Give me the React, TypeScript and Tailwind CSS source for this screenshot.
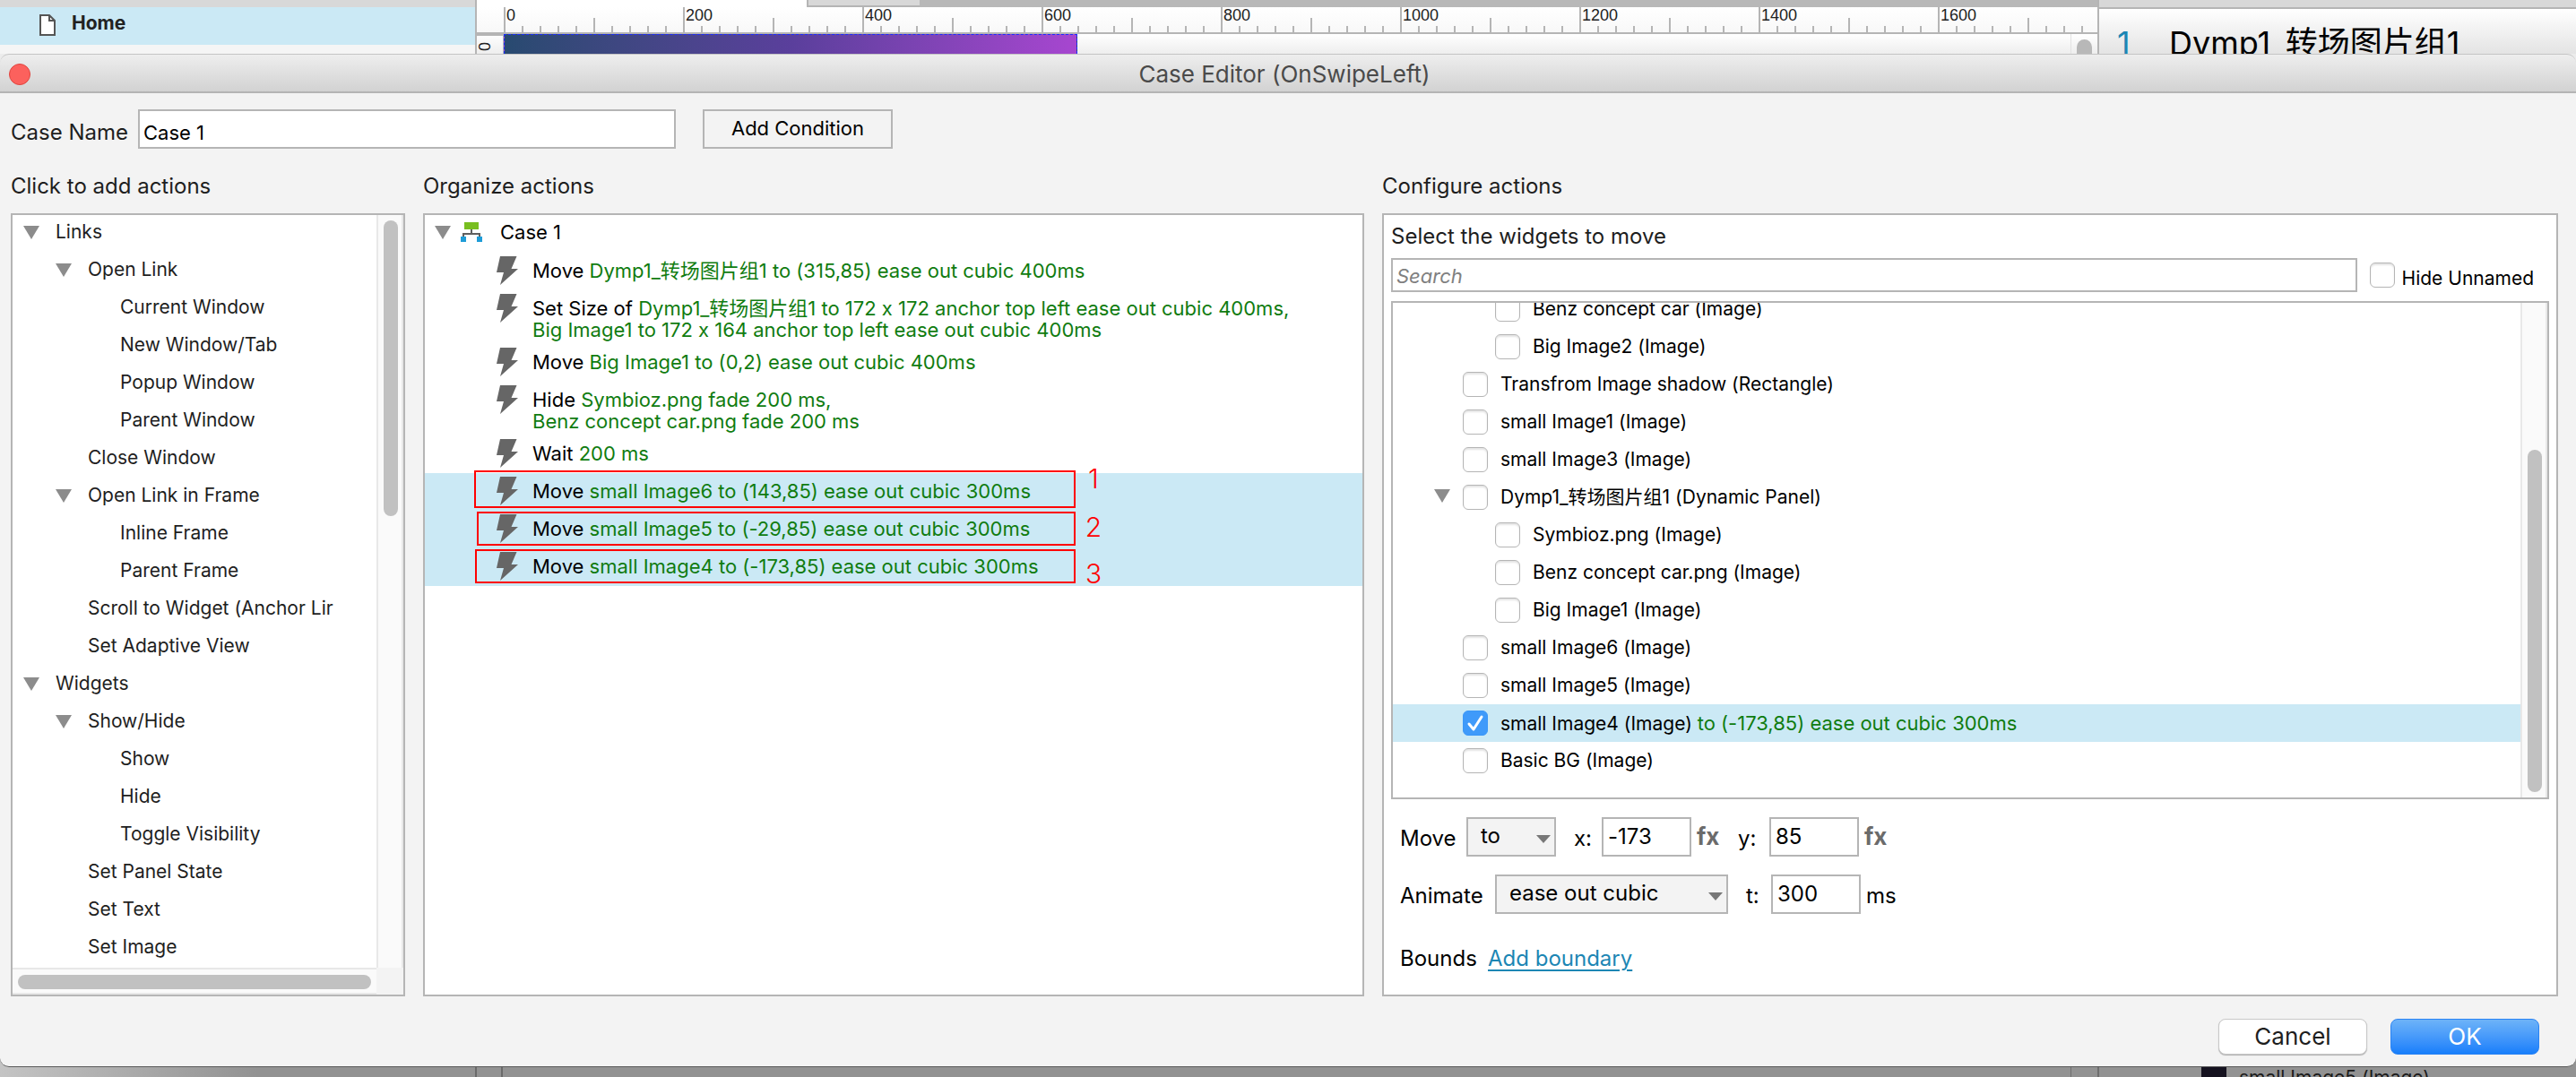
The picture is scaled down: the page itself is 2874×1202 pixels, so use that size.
import React from "react";

const GREEN = "text-[#107c10]";

type ActionNode = { label: string; level: 0 | 1 | 2; open?: boolean };

const actionNodes: ActionNode[] = [
  { label: "Links", level: 0, open: true },
  { label: "Open Link", level: 1, open: true },
  { label: "Current Window", level: 2 },
  { label: "New Window/Tab", level: 2 },
  { label: "Popup Window", level: 2 },
  { label: "Parent Window", level: 2 },
  { label: "Close Window", level: 1 },
  { label: "Open Link in Frame", level: 1, open: true },
  { label: "Inline Frame", level: 2 },
  { label: "Parent Frame", level: 2 },
  { label: "Scroll to Widget (Anchor Lir", level: 1 },
  { label: "Set Adaptive View", level: 1 },
  { label: "Widgets", level: 0, open: true },
  { label: "Show/Hide", level: 1, open: true },
  { label: "Show", level: 2 },
  { label: "Hide", level: 2 },
  { label: "Toggle Visibility", level: 2 },
  { label: "Set Panel State", level: 1 },
  { label: "Set Text", level: 1 },
  { label: "Set Image", level: 1 },
];

const levelPad = { 0: "pl-3", 1: "pl-12", 2: "pl-[84px]" };

type Step = { verb: string; lines: string[]; selected?: boolean };

const steps: Step[] = [
  { verb: "Move", lines: ["Dymp1_转场图片组1 to (315,85) ease out cubic 400ms"] },
  {
    verb: "Set Size of",
    lines: [
      "Dymp1_转场图片组1 to 172 x 172 anchor top left ease out cubic 400ms,",
      "Big Image1 to 172 x 164 anchor top left ease out cubic 400ms",
    ],
  },
  { verb: "Move", lines: ["Big Image1 to (0,2) ease out cubic 400ms"] },
  { verb: "Hide", lines: ["Symbioz.png fade 200 ms,", "Benz concept car.png fade 200 ms"] },
  { verb: "Wait", lines: ["200 ms"] },
  { verb: "Move", lines: ["small Image6 to (143,85) ease out cubic 300ms"], selected: true },
  { verb: "Move", lines: ["small Image5 to (-29,85) ease out cubic 300ms"], selected: true },
  { verb: "Move", lines: ["small Image4 to (-173,85) ease out cubic 300ms"], selected: true },
];

type Widget = { label: string; nested?: boolean; open?: boolean; detail?: string };

const widgets: Widget[] = [
  { label: "Benz concept car (Image)", nested: true },
  { label: "Big Image2 (Image)", nested: true },
  { label: "Transfrom Image shadow (Rectangle)" },
  { label: "small Image1 (Image)" },
  { label: "small Image3 (Image)" },
  { label: "Dymp1_转场图片组1 (Dynamic Panel)", open: true },
  { label: "Symbioz.png (Image)", nested: true },
  { label: "Benz concept car.png (Image)", nested: true },
  { label: "Big Image1 (Image)", nested: true },
  { label: "small Image6 (Image)" },
  { label: "small Image5 (Image)" },
  { label: "small Image4 (Image)", detail: "to (-173,85) ease out cubic 300ms" },
  { label: "Basic BG (Image)" },
];

const annotations = [
  { n: "1", box: "left-[55px] right-[320px] top-[285px] h-[42px]", tag: "top-[276px]" },
  { n: "2", box: "left-[58px] right-[320px] top-[331px] h-[38px]", tag: "top-[330px]" },
  { n: "3", box: "left-[56px] right-[320px] top-[373px] h-[38px]", tag: "top-[382px]" },
];

function Triangle() {
  return (
    <svg width="18" height="16" viewBox="0 0 18 16" className="shrink-0" aria-hidden="true">
      <path d="M0 1h18L9 16z" fill="#8c8c8c" />
    </svg>
  );
}

function Bolt() {
  return (
    <svg width="24" height="32" viewBox="0 0 24 32" className="mt-1 shrink-0" aria-hidden="true">
      <path d="M4 0h18.500l-6 14H24L4 32l4-14H0z" fill="#666" />
    </svg>
  );
}

function CaseIcon() {
  return (
    <svg width="24" height="22" viewBox="0 0 24 22" className="shrink-0" aria-hidden="true">
      <path d="M12 8v5M3 17v-4h18v4" fill="none" stroke="#5f5f5f" strokeWidth="2" />
      <path d="M4 0h16v8H4z" fill="#78be20" />
      <path d="M0 16h6v6H0zM18 16h6v6h-6z" fill="#1e9cd7" />
    </svg>
  );
}

function Check({ id, checked }: { id: string; checked?: boolean }) {
  return (
    <span className="relative flex size-7 shrink-0">
      <input
        id={id}
        type="checkbox"
        defaultChecked={checked}
        className="peer size-7 appearance-none rounded-md border border-[#b5b5b5] bg-white shadow-[inset_0_2px_2px_#e4e4e4] checked:border-[#3b97f8] checked:bg-[#3f9afa] checked:shadow-none"
      />
      <svg viewBox="0 0 28 28" className="pointer-events-none absolute inset-0 hidden peer-checked:block" aria-hidden="true">
        <path d="M7 15l5 6 9-14" fill="none" stroke="#fff" strokeWidth="3" strokeLinecap="round" strokeLinejoin="round" />
      </svg>
    </span>
  );
}

function Combo({ label, value, width }: { label: string; value: string; width: string }) {
  return (
    <span className={`relative flex h-11 ${width}`}>
      <select
        aria-label={label}
        className="h-full w-full appearance-none border-2 border-[#b5b5b5] bg-[#f3f3f3] pb-[2px] pl-[14px] text-black outline-none"
      >
        <option>{value}</option>
      </select>
      <svg width="16" height="9" viewBox="0 0 16 9" className="pointer-events-none absolute top-5 right-[6px]" aria-hidden="true">
        <path d="M0 0h16L8 9z" fill="#777" />
      </svg>
    </span>
  );
}

function NumberBox({ id, value }: { id: string; value: string }) {
  return (
    <input
      id={id}
      type="text"
      defaultValue={value}
      className="h-11 w-[100px] border-2 border-[#b5b5b5] bg-white pb-[2px] pl-[5px] text-black outline-none"
    />
  );
}

function FxButton() {
  return (
    <button type="button" className="ml-[6px] w-[28px] text-left text-[26px] leading-8 font-bold text-[#6b6b6b]">
      fx
    </button>
  );
}

function Ruler() {
  return (
    <div className="flex h-[30px] shrink-0 items-stretch overflow-hidden border-b-2 border-[#b5b5b5] bg-gradient-to-b from-white to-[#f8f8f8] pl-[30px]">
      {[0, 200, 400, 600, 800, 1000, 1200, 1400, 1600].map((mark) => (
        <div key={mark} className="relative flex shrink-0 items-end">
          {Array.from({ length: 10 }, (_, i) => (
            <span
              key={i}
              className={`w-5 shrink-0 border-l-2 border-[#b5b5b5] ${i === 0 ? "h-7" : i === 5 ? "h-4" : "h-[7px]"}`}
            />
          ))}
          <span className="absolute top-0 left-[3px] font-['Liberation_Sans',sans-serif] text-lg leading-[18px] text-[#222]">
            {mark}
          </span>
        </div>
      ))}
    </div>
  );
}

function Workspace() {
  return (
    <div className="flex h-[60px] overflow-hidden">
      <aside className="w-[530px] shrink-0 border-t-8 border-[#d8d8d8] bg-[#f5f5f5]">
        <div className="flex h-[42px] items-center bg-[#cbe9f5] pb-[2px] pl-11">
          <svg width="18" height="24" viewBox="0 0 18 24" aria-hidden="true">
            <path d="M1 1h10l6 6v16H1z" fill="#fff" stroke="#555" strokeWidth="2" />
            <path d="M11 1v6h6" fill="none" stroke="#555" strokeWidth="2" />
          </svg>
          <span className="pb-1 pl-[18px] text-[21px] leading-6 font-bold text-[#222]">Home</span>
        </div>
      </aside>
      <div className="flex min-w-0 flex-1 flex-col border-x-2 border-[#b5b5b5] bg-white">
        <div className="flex h-2 shrink-0">
          <span className="w-[368px] bg-white" />
          <span className="w-[126px] border-b-2 border-l-2 border-[#b5b5b5] bg-[#d8d8d8]" />
          <span className="flex-1 bg-[#b8b8b8]" />
        </div>
        <Ruler />
        <div className="flex h-[22px] bg-gradient-to-b from-white to-[#eee]">
          <span className="flex w-[30px] items-center border-t-2 border-r border-[#b5b5b5] pt-1 pl-1">
            <span className="-rotate-90 font-['Liberation_Sans',sans-serif] text-lg leading-[18px] text-[#222]">0</span>
          </span>
          <div className="w-[640px] border border-b-0 border-dashed border-[#1a2cff] bg-gradient-to-r from-[#284a70] via-[#5a3f9c] via-50% to-[#a746d0]" />
          <div className="ml-auto w-[30px] overflow-hidden border-l border-[#e2e2e2] px-[6px] pt-[6px]">
            <div className="h-10 rounded-full bg-[#b8b8b8]" />
          </div>
        </div>
      </div>
      <aside className="w-[532px] shrink-0 border-t-8 border-[#d8d8d8]">
        <div className="flex border-t-2 border-[#b5b5b5] bg-gradient-to-b from-white to-[#ddd] pt-[14px] pl-5 text-4xl leading-[48px] whitespace-nowrap text-black">
          <span className="w-[58px] text-[#1c86b4]">1</span>
          <span>Dymp1_转场图片组1</span>
        </div>
      </aside>
    </div>
  );
}

export default function App() {
  return (
    <div className="flex min-h-screen flex-col overflow-hidden bg-[#ececec] font-['Inter','Noto_Sans_CJK_SC',sans-serif] text-[#1e1e1e] [font-feature-settings:'calt'_0]">
      <Workspace />

      <main className="relative z-10 flex flex-1 flex-col rounded-t-[10px] rounded-b-[10px] border-b border-[#5a5a5a] bg-[#f3f3f3]">
        <header className="relative flex h-11 shrink-0 items-center justify-center rounded-t-[10px] border-t border-b-2 border-t-[#c4c4c4] border-b-[#b4b4b4] bg-gradient-to-b from-[#eee] to-[#d2d2d2] pt-[2px] pr-2">
          <button
            type="button"
            aria-label="Close"
            className="absolute left-[10px] size-6 rounded-full border border-[#e0443e] bg-[#fc615d]"
          />
          <h1 className="text-[26px] leading-8 text-[#4a4a4a]">Case Editor (OnSwipeLeft)</h1>
        </header>

        <div className="flex items-center pt-[18px] pl-3 text-2xl">
          <label htmlFor="case-name" className="w-[142px] shrink-0 pt-2">
            Case Name
          </label>
          <input
            id="case-name"
            type="text"
            defaultValue="Case 1"
            className="h-11 w-[600px] border-2 border-[#b5b5b5] bg-white pt-2 pl-1 text-[22px] text-black outline-none"
          />
          <button type="button" className="ml-[30px] h-11 w-[212px] border-2 border-[#b5b5b5] text-[22px] text-black">
            Add Condition
          </button>
        </div>

        <div className="grid flex-1 grid-cols-[440px_1050fr_1312fr] grid-rows-[auto_1fr] gap-x-5 pr-5 pl-3">
          <h2 className="flex h-[72px] items-center pt-3 text-2xl">Click to add actions</h2>
          <h2 className="flex h-[72px] items-center pt-3 text-2xl">Organize actions</h2>
          <h2 className="flex h-[72px] items-center pt-3 text-2xl">Configure actions</h2>

          <section className="grid grid-cols-[1fr_30px] grid-rows-[1fr_30px] border-2 border-[#b5b5b5] bg-white">
            <ul className="text-[21px] leading-6">
              {actionNodes.map((node, i) => (
                <li key={i} className={`flex h-[42px] items-center pb-[5px] ${levelPad[node.level]}`}>
                  <span className="flex w-9 shrink-0">{node.open && <Triangle />}</span>
                  <button type="button" className="whitespace-nowrap">
                    {node.label}
                  </button>
                </li>
              ))}
            </ul>
            <div className="border-x-2 border-[#e8e8e8] bg-[#fafafa] px-[6px] pt-[6px]">
              <div className="h-[330px] w-4 rounded-full bg-[#c1c1c1]" />
            </div>
            <div className="border-y-2 border-[#e8e8e8] bg-[#fafafa] p-[6px]">
              <div className="h-4 w-[394px] rounded-full bg-[#c1c1c1]" />
            </div>
            <div className="bg-[#f3f3f3]" />
          </section>

          <section className="relative border-2 border-[#b5b5b5] bg-white text-[22px] leading-6 text-black">
            <div className="flex h-[42px] items-center pb-[5px] pl-[11px]">
              <Triangle />
              <span className="w-[11px]" />
              <CaseIcon />
              <span className="pl-5">Case 1</span>
            </div>
            <ul>
              {steps.map((step, i) => (
                <li
                  key={i}
                  className={`flex items-start pl-20 ${step.lines.length > 1 ? "h-[60px]" : "h-[42px]"} ${step.selected ? "bg-[#cbe9f5]" : ""}`}
                >
                  <Bolt />
                  <p className="pt-2 pl-4 whitespace-nowrap">
                    {step.verb} <span className={GREEN}>{step.lines[0]}</span>
                    {step.lines[1] && <span className={`block ${GREEN}`}>{step.lines[1]}</span>}
                  </p>
                </li>
              ))}
            </ul>
            {annotations.map((a) => (
              <React.Fragment key={a.n}>
                <span className={`absolute border-2 border-[#ff0000] ${a.box}`} />
                <span
                  className={`absolute right-[288px] w-6 text-center text-[30px] leading-9 font-light text-[#ff0000] ${a.tag}`}
                >
                  {a.n}
                </span>
              </React.Fragment>
            ))}
          </section>

          <section className="flex flex-col border-2 border-[#b5b5b5] bg-white px-2 text-black">
            <h3 className="pt-2 text-2xl leading-8 text-[#1e1e1e]">Select the widgets to move</h3>
            <div className="mt-2 flex items-center">
              <input
                type="text"
                aria-label="Search"
                placeholder="Search"
                className="h-[38px] min-w-0 flex-1 border-2 border-[#b5b5b5] pt-[2px] pl-1 text-[22px] outline-none placeholder:text-[#808080] placeholder:italic"
              />
              <span className="ml-[14px] flex">
                <Check id="hide-unnamed" />
              </span>
              <label htmlFor="hide-unnamed" className="pt-2 pr-[17px] pl-2 text-[21px] leading-6">
                Hide Unnamed
              </label>
            </div>

            <div className="mt-[10px] flex h-[556px] overflow-hidden border-2 border-[#b5b5b5]">
              <ul className="-mt-[14px] flex-1 text-[21px] leading-6">
                {widgets.map((w, i) => (
                  <li
                    key={i}
                    className={`flex h-[42px] items-center ${w.nested ? "pl-[82px]" : "pl-[46px]"} ${w.detail ? "bg-[#cbe9f5]" : ""}`}
                  >
                    <span className="flex w-8 shrink-0 pb-1">{w.open && <Triangle />}</span>
                    <Check id={`widget-${i}`} checked={!!w.detail} />
                    <label htmlFor={`widget-${i}`} className="pl-[14px] whitespace-nowrap">
                      {w.label} {w.detail && <span className={`text-[22px] ${GREEN}`}>{w.detail}</span>}
                    </label>
                  </li>
                ))}
              </ul>
              <div className="w-[30px] border-x-2 border-[#e8e8e8] bg-[#fafafa] px-[6px] pt-[164px]">
                <div className="h-[382px] w-4 rounded-full bg-[#c1c1c1]" />
              </div>
            </div>

            <div className="mt-5 flex items-center pl-[10px] text-2xl">
              <span className="w-[74px] pt-1">Move</span>
              <Combo label="Move mode" value="to" width="w-[100px]" />
              <label htmlFor="move-x" className="w-[51px] pt-1 pl-5">x:</label>
              <NumberBox id="move-x" value="-173" />
              <FxButton />
              <label htmlFor="move-y" className="w-[53px] pt-1 pl-[18px]">y:</label>
              <NumberBox id="move-y" value="85" />
              <FxButton />
            </div>
            <div className="mt-5 flex items-center pl-[10px] text-2xl">
              <span className="w-[106px] pt-1">Animate</span>
              <Combo label="Animation" value="ease out cubic" width="w-[260px]" />
              <label htmlFor="duration" className="w-12 pt-1 pl-5">t:</label>
              <NumberBox id="duration" value="300" />
              <span className="pt-1 pl-[6px]">ms</span>
            </div>
            <div className="mt-[34px] flex items-center pl-[10px] text-2xl">
              <span className="w-[98px]">Bounds</span>
              <a href="#boundary" className="text-[#1c86b4] underline decoration-2 underline-offset-4">
                Add boundary
              </a>
            </div>
          </section>
        </div>

        <footer className="flex h-[78px] shrink-0 items-start justify-end gap-[26px] pt-[25px] pr-[41px] text-[26px] leading-8">
          <button
            type="button"
            className="h-10 w-[166px] rounded-lg border border-[#c8c8c8] bg-white text-[#1e1e1e] shadow-[0_1px_1px_#b0b0b0]"
          >
            Cancel
          </button>
          <button
            type="button"
            className="h-10 w-[166px] rounded-lg border border-[#2a83f3] bg-gradient-to-b from-[#6db3f8] to-[#157efb] text-white"
          >
            OK
          </button>
        </footer>
      </main>

      <div className="-mt-3 flex h-6 overflow-hidden bg-gradient-to-r from-[#c4c4c4] via-[#929292] via-10% to-[#929292] pt-3">
        <span className="ml-[530px] w-[31px] border-x-2 border-[#6a6a6a]" />
        <span className="flex-1" />
        <span className="w-8 border-r-2 border-l border-[#6e6e6e]" />
        <span className="ml-[114px] w-7 bg-[#15121f]" />
        <span className="w-[390px] pl-[14px] text-[21px] leading-6 whitespace-nowrap text-[#1a1a1a]">small Image5 (Image)</span>
      </div>
    </div>
  );
}
